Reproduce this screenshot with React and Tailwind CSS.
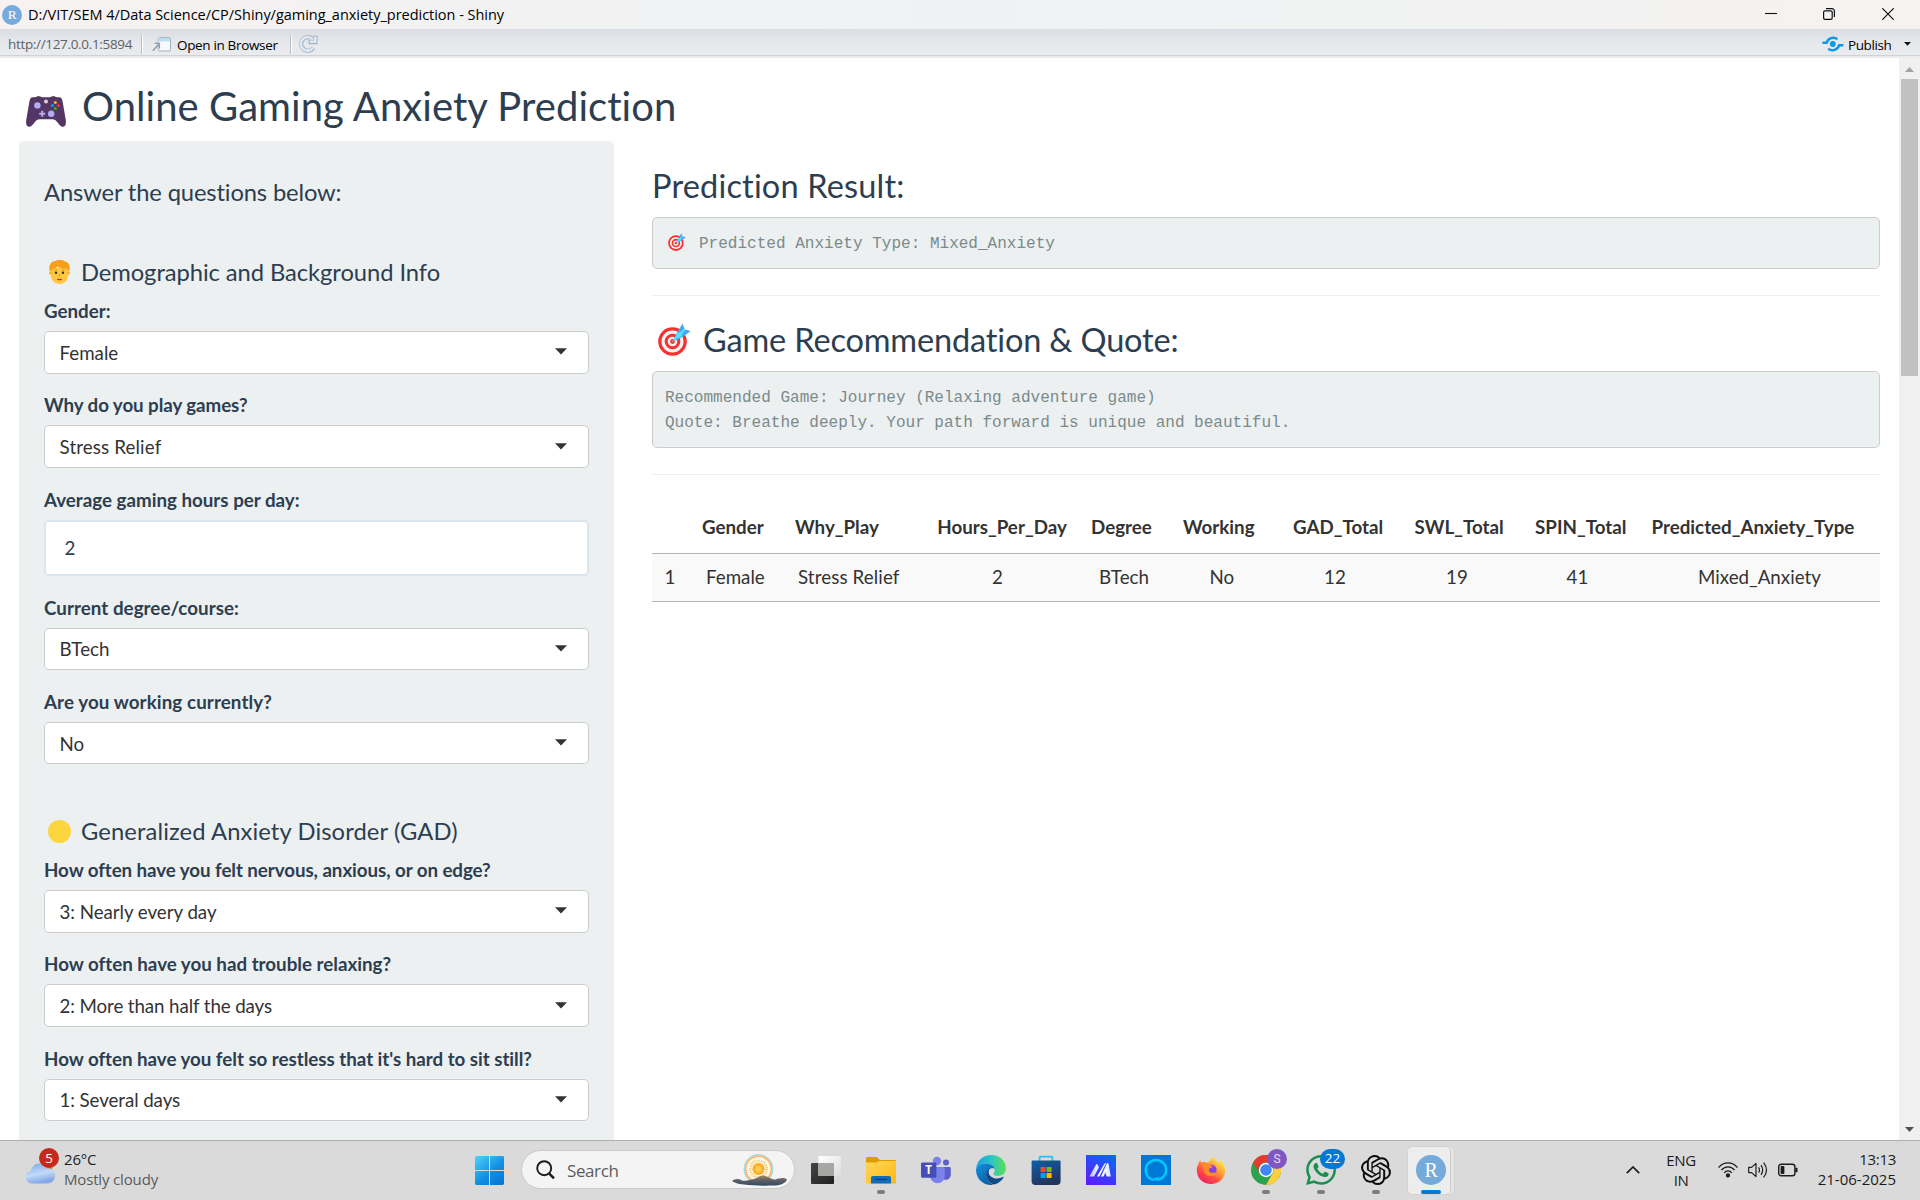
import { SiOpenai, SiWhatsapp } from "react-icons/si";

const RLogo = ({ size }) => (
  <svg width={size} height={size} viewBox="0 0 30 30" className="shrink-0">
    <circle cx="15" cy="15" r="15" fill="#75aadb" />
    <text x="15.2" y="21.6" textAnchor="middle" fontFamily="Liberation Serif, serif" fontSize="20" fill="#fff">R</text>
  </svg>
);

const Gamepad = () => (
  <svg width="40" height="31" viewBox="0 0 40 31" className="shrink-0">
    <path d="M9.4 1.8 Q12 -0.4 15.6 1.4 Z M24.4 1.4 Q28 -0.4 30.6 1.8 Z" fill="#1c1c1c" stroke="#1c1c1c" strokeWidth="0.6" />
    <path d="M7 1.2 H33 C35.5 1.2 36 3 36.6 5.5 L39.6 23 C40.4 28 39.6 30.4 37.2 30.8 C35 31.2 33.6 29.2 31.6 26.6 C30 24.4 28.6 23.2 26.4 23.2 H13.6 C11.4 23.2 10 24.4 8.4 26.6 C6.4 29.2 5 31.2 2.8 30.8 C0.4 30.4 -0.4 28 0.4 23 L3.4 5.5 C4 3 4.5 1.2 7 1.2 Z" fill="#533566" />
    <circle cx="11.4" cy="9.4" r="3.2" fill="#b4acf2" />
    <circle cx="25.2" cy="17.8" r="3.2" fill="#b4acf2" />
    <path d="M15.2 14.8 h2 v2 h2 v2 h-2 v2 h-2 v-2 h-2 v-2 h2 Z" fill="#b4acf2" />
    <circle cx="20" cy="5.6" r="2" fill="#d9d3d9" />
    <circle cx="29.4" cy="6.4" r="1.5" fill="#f9b917" />
    <circle cx="32.4" cy="9.4" r="1.5" fill="#f8312f" />
    <circle cx="26.4" cy="9.4" r="1.5" fill="#00a6ed" />
    <circle cx="29.4" cy="12.6" r="1.5" fill="#44b300" />
  </svg>
);

const Person = () => (
  <svg width="21" height="24" viewBox="0 0 21 24" className="shrink-0">
    <path d="M1.6 8 H19.4 V14 C19.4 20 15.6 24 10.5 24 C5.4 24 1.6 20 1.6 14 Z" fill="#ffc83d" />
    <circle cx="1.6" cy="13" r="1.6" fill="#ffb02e" />
    <circle cx="19.4" cy="13" r="1.6" fill="#ffb02e" />
    <path d="M0.6 11.5 C-0.6 5 2 1.2 6 1.2 C8 -0.6 14 -0.2 16 1.4 C20.6 2.4 21.4 6.4 20.4 11.5 C19.6 10.4 18.6 9.4 17.6 8.6 C15 9 10.6 8.4 8.6 6.6 C7.2 8.6 3.4 9 2.4 10 Z" fill="#f59f1d" />
    <circle cx="7" cy="12.8" r="1.2" fill="#402a32" />
    <circle cx="14" cy="12.8" r="1.2" fill="#402a32" />
    <path d="M5.4 10.4 q1.4 -1 2.8 -0.2 M12.8 10.2 q1.4 -0.8 2.8 0.2" stroke="#d67d00" strokeWidth="0.7" fill="none" />
    <path d="M10.5 13.5 v3" stroke="#f59f1d" strokeWidth="1.2" />
    <path d="M8.4 19 q2.1 1.6 4.2 0" stroke="#bb1d40" strokeWidth="1.1" fill="none" />
  </svg>
);

const Target = ({ size }) => (
  <svg width={size} height={size} viewBox="0 0 33 33" className="shrink-0">
    <circle cx="14.5" cy="18.5" r="14.3" fill="#f8312f" />
    <circle cx="14.5" cy="18.5" r="11" fill="#f4f4f4" />
    <circle cx="14.5" cy="18.5" r="7.8" fill="#f8312f" />
    <circle cx="14.5" cy="18.5" r="4.8" fill="#f4f4f4" />
    <circle cx="14.5" cy="18.5" r="2.4" fill="#f8312f" />
    <path d="M14 19 L22 11" stroke="#9b9b9b" strokeWidth="1.5" />
    <path d="M16 15 L20.5 7.2 L24.6 0.4 L26.6 6.2 L32.6 8 L26.6 12.4 L18.6 17.4 Z" fill="#46a4fb" />
    <path d="M15.4 17.4 L19.4 10 L25 8 L23.6 13.4 Z" fill="#50e2ff" />
    <path d="M22 11.2 L26.8 6.2" stroke="#50e2ff" strokeWidth="2" />
  </svg>
);

const Select = ({ label, value, labelClass = "", valueClass = "" }) => (
  <div className="mb-[18.75px]">
    <div className="mb-[6.25px] h-[26.78px] whitespace-nowrap font-bold leading-[26.78px]">
      <span className={labelClass}>{label}</span>
    </div>
    <div className="flex h-[42.5px] items-center justify-between rounded-[5px] border border-[#ccc] bg-white pl-[14.5px] pr-[21px] text-[#333]">
      <span className={`leading-[27px] ${valueClass}`}>{value}</span>
      <svg width="12" height="7" viewBox="0 0 12 7" className="mb-[1px]">
        <path d="M0 0.3 H12 L6 6.6 Z" fill="#333" />
      </svg>
    </div>
  </div>
);

const COLS = [
  ["", "1", "w-[50px]", "", "pl-[12.5px]"],
  ["Gender", "Female", "w-[93px]", "pl-0", "pl-[4px]"],
  ["Why_Play", "Stress Relief", "w-[142px]", "pl-0", "pl-[3px] tracking-[0.1px]"],
  ["Hours_Per_Day", "2", "w-[154px]", "pl-[0.25px]", "pl-[55px]"],
  ["Degree", "BTech", "w-[92px]", "pl-0", "pl-[8px]"],
  ["Working", "No", "w-[109px]", "pl-0", "pl-[26.5px]"],
  ["GAD_Total", "12", "w-[122px]", "pl-px", "pl-[32px]"],
  ["SWL_Total", "19", "w-[120px]", "pl-[0.5px]", "pl-[32px]"],
  ["SPIN_Total", "41", "w-[117px]", "pl-px", "pl-[32.5px]"],
  ["Predicted_Anxiety_Type", "Mixed_Anxiety", "w-[229px]", "pl-[0.5px]", "pl-[47px]"],
];

const TeamsIcon = () => (
  <svg width="30" height="30" viewBox="0 0 30 30">
    <circle cx="25" cy="7.4" r="3" fill="#5b5fc7" />
    <path d="M20 12 h8.4 a1.4 1.4 0 0 1 1.4 1.4 v6.4 a5 5 0 0 1 -7 4.6 Z" fill="#5b5fc7" />
    <circle cx="16" cy="6" r="4.2" fill="#7b83eb" />
    <path d="M9 12 h13.4 a1.4 1.4 0 0 1 1.4 1.4 v7.6 a7.2 7.2 0 0 1 -14.6 0 Z" fill="#7b83eb" />
    <rect x="0" y="7.4" width="15.4" height="15.4" rx="1.4" fill="#464eb8" />
    <text x="7.7" y="19.2" textAnchor="middle" fontFamily="Open Sans, sans-serif" fontWeight="700" fontSize="11.5" fill="#fff">T</text>
  </svg>
);

const EdgeIcon = () => (
  <svg width="30" height="30" viewBox="0 0 30 30">
    <defs>
      <linearGradient id="eg1" x1="0" y1="0.3" x2="1" y2="0.3">
        <stop offset="0" stopColor="#1b9de2" /><stop offset="0.5" stopColor="#2cc4c8" /><stop offset="1" stopColor="#5fe04e" />
      </linearGradient>
      <linearGradient id="eg2" x1="0" y1="0" x2="0.8" y2="1">
        <stop offset="0" stopColor="#1191df" /><stop offset="1" stopColor="#0c59a4" />
      </linearGradient>
    </defs>
    <path d="M0.1 14 C0.8 6 7 0 15 0 C24 0 30 6.4 30 13 C30 18 26.4 21 22 21 C18.4 21 17 19.6 17.4 18.6 C18.6 17.2 19 15.8 18.4 14 C17 10.4 13.6 8.6 9.6 8.6 C5 8.6 1.6 10.8 0.1 14 Z" fill="url(#eg1)" />
    <path d="M0.1 14 C1.6 10.8 5 8.6 9.6 8.6 C14 8.6 17.4 10.6 18.6 13.6 C14.4 12.4 10.4 15 10.4 20 C10.4 25 14 29 18 29.6 C17 30 16 30 15 30 C6.6 30 -0.6 23 0.1 14 Z" fill="url(#eg2)" />
    <path d="M14.4 13 C10.6 14.6 9 19 11 23.4 C12.6 27.4 16.6 30 20 29 C23.4 27.8 26 25.4 27.6 22.6 C28 21.8 27.4 21.6 26.8 22 C22 24.6 14.6 23.6 12.8 18.4 C12.4 16.4 13 14.4 14.4 13 Z" fill="#114a8b" />
  </svg>
);

const StoreIcon = () => (
  <svg width="30" height="30" viewBox="0 0 30 30">
    <defs>
      <linearGradient id="st" x1="0" y1="0" x2="0.4" y2="1"><stop offset="0" stopColor="#0f5fa6" /><stop offset="1" stopColor="#23345f" /></linearGradient>
    </defs>
    <path d="M8.6 7 V2.6 a1 1 0 0 1 1 -1 H20.4 a1 1 0 0 1 1 1 V7" fill="none" stroke="#2bc0f2" strokeWidth="1.8" />
    <path d="M0.6 6.4 a0.8 0.8 0 0 1 0.8 -0.8 H28.8 a0.8 0.8 0 0 1 0.8 0.8 V26 a4 4 0 0 1 -4 4 H4.6 a4 4 0 0 1 -4 -4 Z" fill="url(#st)" />
    <path d="M9.6 12 h5 v5 h-5 Z" fill="#f25022" /><path d="M15.6 12 h5 v5 h-5 Z" fill="#7fba00" />
    <path d="M9.6 18 h5 v5 h-5 Z" fill="#00a4ef" /><path d="M15.6 18 h5 v5 h-5 Z" fill="#ffb900" />
  </svg>
);

const AsusIcon = () => (
  <svg width="30" height="30" viewBox="0 0 30 30">
    <defs>
      <linearGradient id="as" x1="0.2" y1="1" x2="0.8" y2="0"><stop offset="0" stopColor="#5a1cff" /><stop offset="1" stopColor="#0b68f5" /></linearGradient>
      <linearGradient id="asw" x1="0" y1="0" x2="1" y2="0"><stop offset="0" stopColor="#fff" stopOpacity="0.65" /><stop offset="0.5" stopColor="#fff" /><stop offset="1" stopColor="#dfe4ff" /></linearGradient>
    </defs>
    <rect width="30" height="30" fill="url(#as)" />
    <path d="M3.4 21.6 L9.8 10 q1 -1.8 2 0 l1 2.4 L8 21.6 Z M11 21.6 L18.6 8.6 q0.8 -1 1.6 -0.6 L13.4 21.6 Z M15 21.6 L20.6 9 q1 -1.8 2 0 L24.8 21.6 H20.6 L19.4 17.6 L17.6 21.6 Z" fill="url(#asw)" />
  </svg>
);

const AlexaIcon = () => (
  <svg width="30" height="30" viewBox="0 0 30 30">
    <rect width="30" height="30" fill="#0078d7" />
    <path d="M13.2 25 C8.2 24.4 4.8 20.6 4.8 15.2 A10.2 10.2 0 1 1 25.2 15.2 C25.2 20 21.6 24 16.2 25" fill="none" stroke="#00caff" strokeWidth="2.5" />
    <path d="M12.6 22.6 Q15.4 23.4 18.6 21.8 L14.6 26.4 Z" fill="#00caff" />
  </svg>
);

const FirefoxIcon = () => (
  <svg width="30" height="30" viewBox="0 0 30 30">
    <defs>
      <linearGradient id="ff" x1="0.85" y1="0.1" x2="0.2" y2="1"><stop offset="0" stopColor="#fff44f" /><stop offset="0.35" stopColor="#ffa436" /><stop offset="0.65" stopColor="#ff4f42" /><stop offset="1" stopColor="#f5156c" /></linearGradient>
      <linearGradient id="fp" x1="0.3" y1="0" x2="0.6" y2="1"><stop offset="0" stopColor="#b833e1" /><stop offset="1" stopColor="#5b4fe0" /></linearGradient>
    </defs>
    <path d="M17.6 0.6 C18 4.4 20.6 5.6 23 8 C23.2 6.6 23.4 5.4 24.6 4.6 C26.6 8.6 29.4 10.4 29.2 16 C28.8 23.6 22.8 29 15 29 C7 29 1 23.4 0.8 15.6 C0.8 12.6 1.4 10.6 2.6 8.4 C2.8 7.2 3.4 6 4.6 5.2 C4.4 6.4 4.8 7.2 5.6 7.6 C7.6 7 9.4 7 11 7.8 C13.6 7 15.2 4.4 17.6 0.6 Z" fill="url(#ff)" />
    <circle cx="15.2" cy="14.8" r="5.4" fill="url(#fp)" />
    <path d="M5 8 C8 6.6 11 7.4 13.4 10 C14.8 10.2 16.4 10.6 16.6 11.6 C16 13.2 13.4 13 12.8 14.6 C12.6 17 14.6 18.4 17 17.6 C19 17 20 17.8 20.2 18.4 C18.6 21.6 12 22.4 9 18.4 C7 15.8 8 12.6 5 8 Z" fill="#ff8a2b" />
  </svg>
);

const ChromeIcon = () => (
  <svg width="30" height="30" viewBox="0 0 30 30">
    <circle cx="15" cy="15" r="15" fill="#2ba24c" />
    <path d="M2 7.5 A15 15 0 0 1 28 7.5 H15 A7.5 7.5 0 0 0 8.5 18.75 Z" fill="#e33b2e" />
    <path d="M28 7.5 A15 15 0 0 1 15 30 L21.5 18.75 A7.5 7.5 0 0 0 15 7.5 Z" fill="#ffcd40" />
    <circle cx="15" cy="15" r="7.2" fill="#fff" />
    <circle cx="15" cy="15" r="5.8" fill="#4285f4" />
  </svg>
);

const FolderIcon = () => (
  <svg width="30" height="30" viewBox="0 0 30 30">
    <defs><linearGradient id="fo" x1="0" y1="0" x2="1" y2="1"><stop offset="0" stopColor="#ffd75a" /><stop offset="1" stopColor="#fdb813" /></linearGradient></defs>
    <path d="M0 3.4 a1.4 1.4 0 0 1 1.4 -1.4 H10.6 L14 5 H28.6 a1.4 1.4 0 0 1 1.4 1.4 V10 H0 Z" fill="#dd9b05" />
    <path d="M0 7.4 H10.6 L13.4 6 H29 a1 1 0 0 1 1 1 V28.4 H0 Z" fill="url(#fo)" />
    <path d="M5 28.4 V23 a2 2 0 0 1 2 -2 H23 a2 2 0 0 1 2 2 V28.4 Z" fill="#0f6cbd" />
    <path d="M9 24.4 H21" stroke="#0b3f78" strokeWidth="1.2" />
  </svg>
);

const TaskViewIcon = () => (
  <svg width="30" height="30" viewBox="0 0 30 30">
    <defs>
      <linearGradient id="tw" x1="0" y1="0" x2="1" y2="1"><stop offset="0" stopColor="#fff" /><stop offset="1" stopColor="#dedede" /></linearGradient>
      <linearGradient id="tb" x1="0" y1="0" x2="1" y2="1"><stop offset="0" stopColor="#454545" /><stop offset="1" stopColor="#202020" /></linearGradient>
    </defs>
    <rect x="0" y="8" width="23" height="21" rx="1" fill="url(#tb)" />
    <rect x="7.4" y="1" width="22.4" height="20" rx="1" fill="url(#tw)" />
    <rect x="7.4" y="8" width="15.6" height="13" fill="#a6a6a4" />
  </svg>
);

const Landscape = () => (
  <svg width="55" height="34" viewBox="0 0 55 34">
    <defs>
      <radialGradient id="sun"><stop offset="0" stopColor="#ffd75e" /><stop offset="1" stopColor="#fba51d" /></radialGradient>
      <linearGradient id="hill" x1="0" y1="0" x2="0" y2="1"><stop offset="0" stopColor="#a58467" /><stop offset="0.5" stopColor="#5b5f66" /><stop offset="1" stopColor="#2f4a63" /></linearGradient>
    </defs>
    <circle cx="26.5" cy="15" r="14.2" fill="#fbf6ea" stroke="#a9d9df" strokeWidth="1.4" />
    <circle cx="26.5" cy="15" r="12.8" fill="#fdf6e4" stroke="#f9b56b" strokeWidth="1.6" />
    <circle cx="26.5" cy="15" r="8.2" fill="none" stroke="#f7bb48" strokeWidth="2.6" strokeDasharray="0.8 1.35" />
    <circle cx="26.5" cy="15" r="6" fill="url(#sun)" />
    <path d="M0 27 C2 25 5 24.4 8 25.4 C12 28 17 26 22 25 C26 23.6 29 21 32 21.6 C36 22.4 39 25.6 43 25.4 C46 25 51 22.6 55 25.4 C54 29 48 31.6 40 31.6 C30 31.8 20 31.6 12 30.6 C6 30 3 29 0 27 Z" fill="url(#hill)" />
  </svg>
);

const WinLogo = () => (
  <svg width="29" height="29" viewBox="0 0 29 29">
    <defs><linearGradient id="wl" gradientUnits="userSpaceOnUse" x1="0" y1="0" x2="24" y2="29"><stop offset="0" stopColor="#4fd3ff" /><stop offset="0.6" stopColor="#128ee0" /><stop offset="1" stopColor="#0878d4" /></linearGradient></defs>
    <path d="M1 0 H14 V14 H0 V1 Z M15 0 H28 L29 1 V14 H15 Z M0 15 H14 V29 H1 L0 28 Z M15 15 H29 V28 L28 29 H15 Z" fill="url(#wl)" />
  </svg>
);

const TaskbarApp = ({ children, running, badge }) => (
  <div className="relative flex h-[59px] w-[30px] flex-col items-center pt-[14px]">
    {children}
    {running && <div className="mt-[5px] h-[4px] w-[8px] shrink-0 rounded-full bg-[#7d7d7d]" />}
    {badge}
  </div>
);

export default function App() {
  return (
    <div className="flex h-[1200px] w-[1920px] flex-col overflow-hidden bg-white font-['Open_Sans',sans-serif]">
      <header className="flex h-[29px] shrink-0 items-center justify-between bg-linear-to-r from-[#f6f2f1] via-[#eff2f4] to-[#f5f3f1] pl-[2px]">
        <div className="flex items-center gap-[6px]">
          <RLogo size={20} />
          <span className="whitespace-pre text-[14.5px] leading-[20px] tracking-[-0.025px] text-black">D:/VIT/SEM 4/Data Science/CP/Shiny/gaming_anxiety_prediction - Shiny</span>
        </div>
        <div className="flex items-center gap-[47px] pb-px pr-[26px]">
          <svg width="12" height="12" viewBox="0 0 12 12" className="-mr-px"><path d="M0 5.5 H12" stroke="#111" strokeWidth="1.1" /></svg>
          <svg width="12" height="12" viewBox="0 0 12 12" fill="none" stroke="#111" strokeWidth="1.2"><rect x="0.6" y="2.8" width="8.6" height="8.6" rx="1.4" /><path d="M3 0.6 H9 a2.4 2.4 0 0 1 2.4 2.4 V9" /></svg>
          <svg width="12" height="12" viewBox="0 0 12 12"><path d="M0.3 0.3 L11.7 11.7 M11.7 0.3 L0.3 11.7" stroke="#111" strokeWidth="1.2" /></svg>
        </div>
      </header>

      <div className="flex h-[29px] shrink-0 flex-col bg-[#e9ebee]">
        <div className="flex h-[27px] items-center border-b border-[#cfd2d6] bg-linear-to-b from-[#dadde1] via-[#e6e8ec] to-[#e9ebee] pl-[8px] pt-[4px] text-[13.5px]">
          <span className="w-[133px] whitespace-nowrap tracking-[-0.33px] text-[#5f6368]">http://127.0.0.1:5894</span>
          <span className="h-[19px] w-[2px] border-r border-white bg-[#b9bcc0]" />
          <svg width="20" height="15" viewBox="0 0 20 15" className="ml-[9px]">
            <rect x="6.1" y="0.6" width="12.4" height="13.4" rx="1.6" fill="#f6fafd" stroke="#9fb0bf" />
            <path d="M6.3 1 H18.1 V4.4 H6.3 Z" fill="#b9ddf2" />
            <path d="M0.8 13.8 L6.2 7.8 M2.6 6.4 H7.4 V11.4" fill="none" stroke="#8b9aa8" strokeWidth="1.3" />
          </svg>
          <span className="ml-[5px] w-[113px] whitespace-nowrap pt-[2px] tracking-[-0.34px] text-black">Open in Browser</span>
          <span className="h-[19px] w-[2px] border-r border-white bg-[#b9bcc0]" />
          <svg width="20" height="20" viewBox="0 0 20 20" className="ml-[6px]">
            <path d="M15.4 14 A6.8 6.8 0 1 1 14.6 5 M17.4 1.4 V8.2 H10.6" fill="none" stroke="#a5b3c1" strokeWidth="4.2" />
            <path d="M15 14 A6.8 6.8 0 1 1 14.6 5.2 M17.2 2.6 V7.8 H11.8" fill="none" stroke="#dfe9f4" strokeWidth="2.6" />
          </svg>
          <div className="ml-auto flex items-center pr-[9px]">
            <svg width="22" height="16" viewBox="0 0 22 16" fill="none" stroke="#0f96e6" strokeWidth="2.4">
              <circle cx="10.8" cy="8" r="2.9" fill="#0f96e6" stroke="none" />
              <path d="M0.4 6.8 H4.6 C6 2 11.6 0.4 15.4 3.2" /><path d="M21.4 9.2 H17.2 C15.8 14 10 15.6 6.2 12.8" />
            </svg>
            <span className="ml-[4px] w-[56px] pt-[2px] tracking-[-0.4px] text-black">Publish</span>
            <svg width="7" height="4" viewBox="0 0 7 4"><path d="M0 0 H7 L3.5 3.8 Z" fill="#111" /></svg>
          </div>
        </div>
      </div>

      <div className="flex h-[1082px] shrink-0 font-['Lato',sans-serif] text-[18.75px] text-[#2c3e50] [font-variant-ligatures:none]">
        <div className="flex w-[1899px] flex-col pl-[19px] pt-[25px]">
          <h1 className="flex h-[44px] items-center pl-[7px] text-[40px] leading-[44px]">
            <span className="pt-[13px]"><Gamepad /></span>
            <span className="ml-[16px] whitespace-nowrap pt-[2px] tracking-[0.05px]">Online Gaming Anxiety Prediction</span>
          </h1>
          <div className="mt-[14px] flex">
            <aside className="h-[999px] w-[595px] shrink-0 overflow-hidden rounded-t-[5px] bg-[#ecf0f1] px-[25px] pt-[38px]">
              <h4 className="h-[26px] text-[23.75px] leading-[26px] tracking-[-0.14px]">Answer the questions below:</h4>
              <h4 className="mt-[54px] flex h-[26px] items-center pl-[5px] text-[23.75px] leading-[26px]">
                <Person /><span className="ml-[11px] tracking-[-0.07px]">Demographic and Background Info</span>
              </h4>
              <div className="h-[13px]" />
              <Select label="Gender:" value="Female" />
              <Select label="Why do you play games?" value="Stress Relief" labelClass="tracking-[-0.07px]" valueClass="tracking-[0.13px]" />
              <div className="mb-[6.25px] h-[26.78px] font-bold leading-[26.78px]">Average gaming hours per day:</div>
              <div className="mb-[18.75px] flex h-[56.25px] items-center rounded-[5px] border-2 border-[#dce4ec] bg-white pl-[18.5px]">2</div>
              <Select label="Current degree/course:" value="BTech" labelClass="tracking-[0.045px]" />
              <Select label="Are you working currently?" value="No" labelClass="tracking-[0.1px]" />
              <h4 className="mt-[53.5px] flex h-[26px] items-center pl-[4px] text-[23.75px] leading-[26px]">
                <span className="mt-px h-[23px] w-[23px] rounded-full bg-[#fcd53f]" /><span className="ml-[10px] tracking-[0.11px]">Generalized Anxiety Disorder (GAD)</span>
              </h4>
              <div className="h-[13.25px]" />
              <Select label="How often have you felt nervous, anxious, or on edge?" value="3: Nearly every day" labelClass="tracking-[-0.07px]" valueClass="tracking-[-0.05px]" />
              <Select label="How often have you had trouble relaxing?" value="2: More than half the days" valueClass="tracking-[-0.11px]" />
              <Select label="How often have you felt so restless that it's hard to sit still?" value="1: Several days" labelClass="tracking-[-0.027px]" valueClass="tracking-[-0.09px]" />
            </aside>

            <main className="ml-[38px] w-[1228px] pt-[27px]">
              <h3 className="h-[36px] text-[32.5px] leading-[36px] tracking-[0.17px]">Prediction Result:</h3>
              <div className="mt-[13px] flex h-[52px] items-center rounded-[5px] border border-[#ccc] bg-[#ecf0f1] pl-[15px] font-['Liberation_Mono',monospace] text-[16.04px] leading-[25px] text-[#7b8a8b]">
                <span className="mb-[2px]"><Target size={18} /></span>
                <span className="ml-[13px] whitespace-pre pt-[2px]">Predicted Anxiety Type: Mixed_Anxiety</span>
              </div>
              <div className="mt-[26px] h-px bg-[#ecf0f1]" />
              <h3 className="mt-[25px] flex h-[37px] items-center pl-[6px] text-[32.5px] leading-[37px]">
                <Target size={33} /><span className="mb-px ml-[12px] tracking-[-0.15px]">Game Recommendation &amp; Quote:</span>
              </h3>
              <div className="mt-[13px] flex h-[77px] flex-col justify-center whitespace-pre rounded-[5px] border border-[#ccc] bg-[#ecf0f1] pl-[12px] pt-[2px] font-['Liberation_Mono',monospace] text-[16.04px] leading-[25px] text-[#7b8a8b]">
                <span>Recommended Game: Journey (Relaxing adventure game)</span>
                <span>Quote: Breathe deeply. Your path forward is unique and beautiful.</span>
              </div>
              <div className="mt-[26px] h-px bg-[#ecf0f1]" />
              <div className="mt-[26px] flex h-[53px] items-center border-b border-[#b3b5b7] font-bold text-[#333]">
                {COLS.map(([head, , w, p]) => (<div key={head} className={`${w} ${p} shrink-0 whitespace-nowrap`}>{head}</div>))}
              </div>
              <div className="flex h-[48px] items-center border-b border-[#b3b5b7] bg-[#f9f9f9] text-[#333]">
                {COLS.map(([head, cell, w, , p]) => (<div key={head} className={`${w} ${p} shrink-0 whitespace-nowrap`}>{cell}</div>))}
              </div>
            </main>
          </div>
        </div>
        <div className="flex w-[21px] flex-col items-center bg-[#f0f0f0]">
          <svg width="9" height="5" viewBox="0 0 9 5" className="mt-[9px]"><path d="M4.5 0 L9 5 H0 Z" fill="#a3a3a3" /></svg>
          <div className="mt-[7px] h-[297px] w-[17px] bg-[#c1c1c1]" />
          <svg width="9" height="5" viewBox="0 0 9 5" className="mb-[8px] mt-auto"><path d="M0 0 H9 L4.5 5 Z" fill="#505050" /></svg>
        </div>
      </div>

      <footer className="flex h-[60px] shrink-0 border-t border-[#adadad] bg-[#dadada] text-[15px]">
        <div className="flex w-[475px] pl-[25px]">
          <div className="relative w-[30px]">
            <svg width="30" height="22" viewBox="0 0 30 22" className="mt-[21px]">
              <defs><linearGradient id="cl" x1="0" y1="0" x2="0.3" y2="1"><stop offset="0" stopColor="#7da6ea" /><stop offset="0.6" stopColor="#c3daf8" /><stop offset="1" stopColor="#84a8e6" /></linearGradient></defs>
              <circle cx="23.5" cy="4" r="4.5" fill="#f08020" />
              <path d="M6.5 21.5 a6.3 6.3 0 0 1 -0.8 -12.4 C7 4.6 9.6 1.4 14 1.4 C18 1.4 20.6 4 21.4 6.4 C26 5.4 30 9 30 13.6 C30 18 27 21.5 22.6 21.5 Z" fill="url(#cl)" />
            </svg>
            <div className="absolute left-[14px] top-[7px] flex h-[20px] w-[20px] items-center justify-center rounded-full bg-[#c42b1c] text-[13.5px] leading-[20px] text-white">5</div>
          </div>
          <div className="ml-[9px] flex flex-col pt-[8px] leading-[20px] tracking-[-0.16px]">
            <span className="text-[#1f1f1f]">26°C</span>
            <span className="whitespace-nowrap text-[#5a5a5a]">Mostly cloudy</span>
          </div>
        </div>
        <div className="pt-[15px]"><WinLogo /></div>
        <div className="ml-[17px] mt-[9px] flex h-[39px] w-[274px] items-center rounded-full border border-[#c9c9c9] bg-[#f4f4f4] pl-[14px]">
          <svg width="19" height="19" viewBox="0 0 19 19" fill="none" stroke="#1c1c1c" strokeWidth="1.9"><circle cx="8.2" cy="8.2" r="7" /><path d="M13 13.4 L18 18.4" strokeWidth="2.4" /></svg>
          <span className="ml-[12px] pt-[2px] text-[17px] leading-[24px] tracking-[-0.4px] text-[#5c5c5c]">Search</span>
          <span className="ml-auto mr-[7px] pt-[2px]"><Landscape /></span>
        </div>
        <div className="ml-[16px] flex gap-[25px]">
          <TaskbarApp><TaskViewIcon /></TaskbarApp>
          <TaskbarApp running><FolderIcon /></TaskbarApp>
          <TaskbarApp><TeamsIcon /></TaskbarApp>
          <TaskbarApp><EdgeIcon /></TaskbarApp>
          <TaskbarApp><StoreIcon /></TaskbarApp>
          <TaskbarApp><AsusIcon /></TaskbarApp>
          <TaskbarApp><AlexaIcon /></TaskbarApp>
          <TaskbarApp><FirefoxIcon /></TaskbarApp>
          <TaskbarApp running badge={<div className="absolute left-[16px] top-[8px] flex h-[20px] w-[20px] items-center justify-center rounded-full bg-[#7e57c2] font-['Roboto',sans-serif] text-[12px] leading-none text-[#e9def8]">S</div>}><ChromeIcon /></TaskbarApp>
          <TaskbarApp running badge={<div className="absolute left-[14px] top-[8px] flex h-[20px] w-[25px] items-center justify-center rounded-full bg-[#0078d4] text-[13.5px] leading-none text-white">22</div>}><SiWhatsapp size={30} color="#1a8f4f" /></TaskbarApp>
          <TaskbarApp running><SiOpenai size={30} color="#0d0d0d" /></TaskbarApp>
          <div className="-ml-[9px] mt-[5px] flex h-[49px] w-[48px] rounded-[5px] border border-[#d3d3d3] bg-[#e4e4e4]">
            <div className="flex w-[43px] flex-col items-center rounded-[5px] border-r border-[#cccccc] bg-[#ededed] pl-[4px] pt-[8px]">
              <RLogo size={30} />
              <div className="mt-[5px] h-[4px] w-[20px] shrink-0 rounded-full bg-[#0078d4]" />
            </div>
          </div>
        </div>
        <div className="ml-auto flex text-[#1c1c1c]">
          <svg width="14" height="8" viewBox="0 0 14 8" className="mt-[25px]"><path d="M0.8 7.2 L7 1 L13.2 7.2" fill="none" stroke="#1c1c1c" strokeWidth="1.7" /></svg>
          <div className="ml-[25px] flex w-[32px] flex-col items-center pt-[9px] leading-[20px] tracking-[-0.4px]"><span>ENG</span><span>IN</span></div>
          <svg width="20" height="16" viewBox="0 0 20 16" className="ml-[21px] mt-[21px]" fill="none" stroke="#1c1c1c" strokeWidth="1.3">
            <path d="M0.6 5.6 C5.6 -0.6 14.4 -0.6 19.4 5.6" /><path d="M3.4 8.2 C7 3.8 13 3.8 16.6 8.2" /><path d="M6.2 10.8 C8.4 8.2 11.6 8.2 13.8 10.8" /><circle cx="10" cy="13.4" r="1.5" fill="#1c1c1c" />
          </svg>
          <svg width="20" height="18" viewBox="0 0 20 18" className="ml-[10px] mt-[20px]" fill="none" stroke="#1c1c1c" strokeWidth="1.2">
            <path d="M0.7 6.4 H3.6 L8 2.4 V15.6 L3.6 11.6 H0.7 Z" strokeLinejoin="round" /><path d="M10.6 6.4 Q12.4 9 10.6 11.6 M13 4.2 Q16.4 9 13 13.8 M15.6 1.6 Q21.4 9 15.6 16.4" />
          </svg>
          <svg width="20" height="14" viewBox="0 0 20 14" className="ml-[10px] mt-[22px]" fill="none" stroke="#1c1c1c" strokeWidth="1.4">
            <rect x="0.7" y="1.2" width="16.2" height="11.6" rx="2.6" /><rect x="2.6" y="3" width="3.8" height="8" rx="1" fill="#1c1c1c" stroke="none" /><path d="M18.4 4.8 V9.2" strokeWidth="2.2" />
          </svg>
          <div className="mr-[24px] flex w-[98px] flex-col items-end whitespace-nowrap pt-[8px] leading-[20px]"><span className="tracking-[-0.3px]">13:13</span><span>21-06-2025</span></div>
        </div>
      </footer>
    </div>
  );
}
